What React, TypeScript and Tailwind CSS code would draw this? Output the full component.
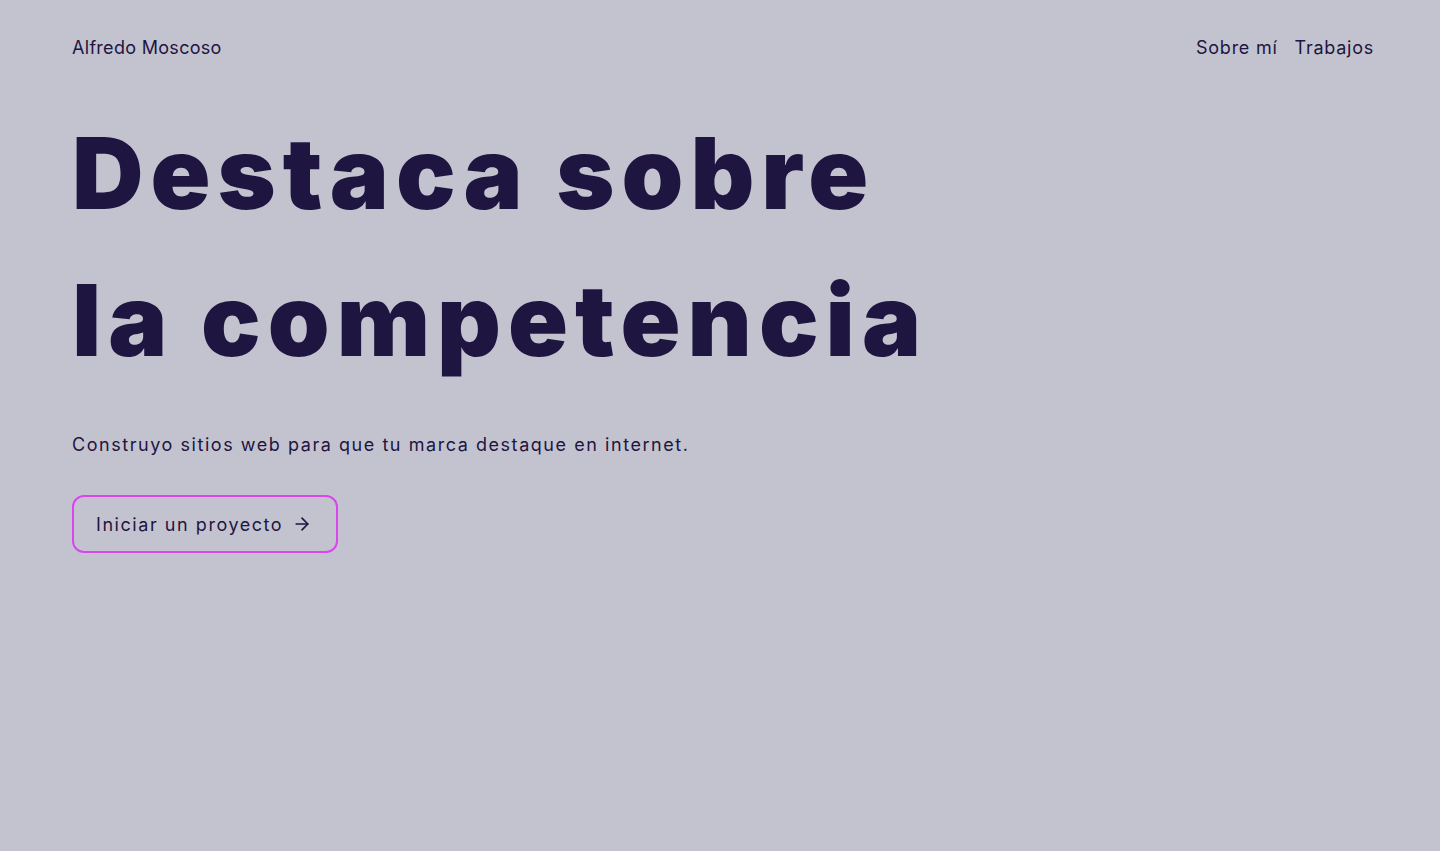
import { ArrowRight } from "lucide-react";

export default function App() {
  return (
    <main className="min-h-[851px] bg-[#c3c3d0] text-[#1e1540] font-['Inter',sans-serif]">
      <header className="flex items-center justify-between pl-[72px] pr-[66px] pt-[35px]">
        <a className="text-[18px] leading-[26px] tracking-[0.3px]">Alfredo Moscoso</a>
        <nav className="flex gap-[17px] text-[18px] leading-[26px] tracking-[0.75px]">
          <a>Sobre mí</a>
          <a>Trabajos</a>
        </nav>
      </header>
      <section className="px-[72px] pt-[39px]">
        <h1 className="text-[99px] leading-[147px] font-black tracking-[7px]">
          Destaca sobre
          <br />
          la competencia
        </h1>
        <p className="mt-[37px] text-[18px] leading-[28px] tracking-[1.55px]">
          Construyo sitios web para que tu marca destaque en internet.
        </p>
        <button className="mt-[36px] flex items-center gap-[9px] h-[58px] pl-[22px] pr-[24px] rounded-[12px] border-2 border-[#d946ef] text-[18px] tracking-[1.55px]">
          Iniciar un proyecto
          <ArrowRight size={20} strokeWidth={2} />
        </button>
      </section>
    </main>
  );
}
